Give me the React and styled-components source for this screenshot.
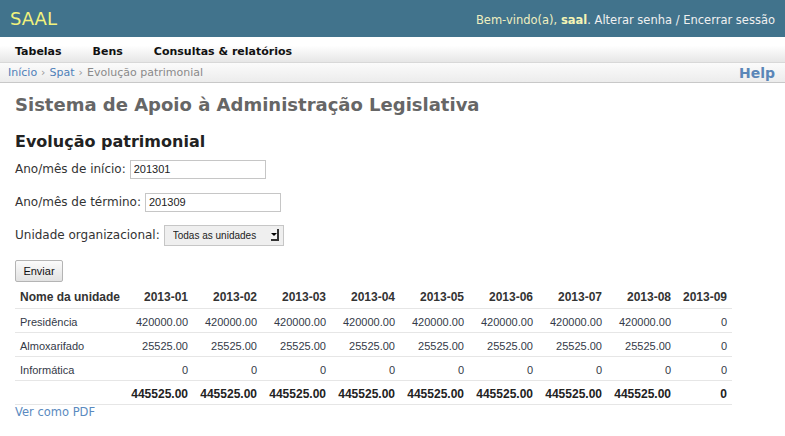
import React from 'react'
import styled, { createGlobalStyle } from 'styled-components'

const GlobalStyle = createGlobalStyle`
  body {
    margin: 0;
    background: #fff;
    font-family: 'DejaVu Sans', 'Noto Sans', sans-serif;
    color: #333;
  }
`

const TopBar = styled.header`
  height: 37px;
  background-color: #41738c;
  display: flex;
  align-items: center;
  justify-content: space-between;
  padding: 0 10px;
`

const Brand = styled.span`
  color: #f2f27c;
  font-size: 18px;
  line-height: 22px;
`

const UserBox = styled.div`
  font-size: 11.5px;
  color: #eeeeee;
  padding-top: 2px;
`

const Welcome = styled.span`
  color: #efefc0;
`

const UserName = styled.strong`
  color: #f5f5b5;
`

const UserLink = styled.a`
  color: #f0f0f0;
  text-decoration: none;
`

const NavBar = styled.nav`
  height: 21px;
  padding-top: 4px;
  display: flex;
  align-items: center;
  background: linear-gradient(#ffffff, #ffffff 35%, #e6e6e6);
  border-bottom: 1px solid #d8d8d8;
`

const NavItem = styled.a`
  font-size: 11px;
  font-weight: bold;
  color: #111;
  padding: 0 15px;
  margin-right: 1px;
  text-decoration: none;
`

const Crumbs = styled.div`
  height: 19px;
  display: flex;
  align-items: center;
  justify-content: space-between;
  padding: 0 10px 0 8px;
  background: linear-gradient(#fbfbfb, #ececec);
  border-bottom: 1px solid #c8c8c8;
  font-size: 11px;
`

const CrumbLink = styled.a`
  color: #4f80b8;
  text-decoration: none;
`

const CrumbSep = styled.span`
  color: #999;
  margin: 0 4px;
`

const CrumbCurrent = styled.span`
  color: #8a8a8a;
`

const HelpLink = styled.a`
  color: #5a86b8;
  font-size: 14px;
  font-weight: bold;
  text-decoration: none;
`

const Main = styled.main`
  padding: 11px 15px 0;
`

const SiteTitle = styled.h1`
  margin: 0 0 16px;
  font-size: 18px;
  line-height: 22px;
  color: #666;
`

const PageTitle = styled.h2`
  margin: 0 0 7px;
  font-size: 16px;
  line-height: 20px;
  color: #222;
`

const FieldRow = styled.div`
  height: 20px;
  display: flex;
  align-items: center;
  gap: 4px;
  margin-bottom: 13px;
  font-size: 12px;
`

const TextInput = styled.input`
  box-sizing: border-box;
  width: 136px;
  height: 19px;
  border: 1px solid #c6c6c6;
  padding: 0 3px;
  font-family: 'Liberation Sans', Arial, sans-serif;
  font-size: 11px;
  color: #222;
  outline: none;
`

const SelectWrap = styled.span`
  position: relative;
  display: inline-block;
`

const Select = styled.select`
  appearance: none;
  box-sizing: border-box;
  width: 120px;
  height: 21px;
  border: 1px solid #c6c6c6;
  background: #efefef;
  padding: 0 16px 0 8px;
  font-family: 'Liberation Sans', Arial, sans-serif;
  font-size: 10px;
  color: #222;
  outline: none;
`

const SelectArrow = styled.span`
  position: absolute;
  right: 5px;
  top: 4px;
  box-sizing: border-box;
  width: 8px;
  height: 12px;
  background: #f4f4f4;
  border-right: 2px solid #333;
  border-bottom: 2px solid #333;
  pointer-events: none;

  &::after {
    content: '';
    position: absolute;
    left: 0;
    top: 4px;
    border-left: 3px solid transparent;
    border-right: 3px solid transparent;
    border-top: 3px solid #000;
  }
`

const SubmitButton = styled.button`
  display: block;
  box-sizing: border-box;
  width: 48px;
  height: 22px;
  margin-top: 15px;
  padding: 0;
  border: 1px solid #b4b4b4;
  border-radius: 2px;
  background: linear-gradient(#fbfbfb, #e2e2e2);
  font-family: 'Liberation Sans', Arial, sans-serif;
  font-size: 11px;
  color: #111;
`

const DataTable = styled.table`
  margin-top: 3px;
  width: 717px;
  table-layout: fixed;
  border-collapse: separate;
  border-spacing: 0;
  font-family: 'Liberation Sans', Arial, sans-serif;
  color: #333;
`

const HeadCell = styled.th`
  padding: 5px 5px 4px;
  line-height: 14px;
  font-size: 12px;
  font-weight: bold;
  color: #333;
  text-align: ${p => (p.$left ? 'left' : 'right')};
  border-bottom: 1px solid #e6e6e6;
  white-space: nowrap;
`

const Cell = styled.td`
  padding: 6px 5px 3px;
  line-height: 14px;
  font-size: ${p => (p.$total ? '12px' : '11px')};
  font-weight: ${p => (p.$total ? 'bold' : 'normal')};
  color: ${p => (p.$total ? '#222' : '#343a48')};
  text-align: ${p => (p.$left ? 'left' : 'right')};
  border-bottom: 1px solid #e6e6e6;
  white-space: nowrap;
`

const PdfLink = styled.a`
  display: block;
  font-size: 11.5px;
  line-height: 14px;
  color: #5a8ac0;
  text-decoration: none;
`

const months = ['2013-01', '2013-02', '2013-03', '2013-04', '2013-05', '2013-06', '2013-07', '2013-08', '2013-09']

const fill = (value, last) => [...Array(8).fill(value), last]

const units = [
  { name: 'Presidência', values: fill('420000.00', '0') },
  { name: 'Almoxarifado', values: fill('25525.00', '0') },
  { name: 'Informática', values: fill('0', '0') },
]

const totals = fill('445525.00', '0')

const App = () => (
  <>
    <GlobalStyle />
    <TopBar>
      <Brand>SAAL</Brand>
      <UserBox>
        <Welcome>Bem-vindo(a), </Welcome>
        <UserName>saal</UserName>. <UserLink href="#">Alterar senha</UserLink> / <UserLink href="#">Encerrar sessão</UserLink>
      </UserBox>
    </TopBar>
    <NavBar>
      <NavItem href="#">Tabelas</NavItem>
      <NavItem href="#">Bens</NavItem>
      <NavItem href="#">Consultas &amp; relatórios</NavItem>
    </NavBar>
    <Crumbs>
      <div>
        <CrumbLink href="#">Início</CrumbLink>
        <CrumbSep>›</CrumbSep>
        <CrumbLink href="#">Spat</CrumbLink>
        <CrumbSep>›</CrumbSep>
        <CrumbCurrent>Evolução patrimonial</CrumbCurrent>
      </div>
      <HelpLink href="#">Help</HelpLink>
    </Crumbs>
    <Main>
      <SiteTitle>Sistema de Apoio à Administração Legislativa</SiteTitle>
      <PageTitle>Evolução patrimonial</PageTitle>
      <FieldRow>
        <label htmlFor="inicio">Ano/mês de início:</label>
        <TextInput id="inicio" defaultValue="201301" />
      </FieldRow>
      <FieldRow>
        <label htmlFor="termino">Ano/mês de término:</label>
        <TextInput id="termino" defaultValue="201309" />
      </FieldRow>
      <FieldRow>
        <label htmlFor="unidade">Unidade organizacional:</label>
        <SelectWrap>
          <Select id="unidade" defaultValue="">
            <option value="">Todas as unidades</option>
          </Select>
          <SelectArrow />
        </SelectWrap>
      </FieldRow>
      <SubmitButton type="submit">Enviar</SubmitButton>
      <DataTable>
        <colgroup>
          <col style={{ width: 109 }} />
          {months.map((m, i) => (
            <col key={m} style={{ width: i === months.length - 1 ? 56 : 69 }} />
          ))}
        </colgroup>
        <thead>
          <tr>
            <HeadCell $left>Nome da unidade</HeadCell>
            {months.map(m => (
              <HeadCell key={m}>{m}</HeadCell>
            ))}
          </tr>
        </thead>
        <tbody>
          {units.map(u => (
            <tr key={u.name}>
              <Cell $left>{u.name}</Cell>
              {u.values.map((v, i) => (
                <Cell key={i}>{v}</Cell>
              ))}
            </tr>
          ))}
          <tr>
            <Cell $left />
            {totals.map((v, i) => (
              <Cell key={i} $total>{v}</Cell>
            ))}
          </tr>
        </tbody>
      </DataTable>
      <PdfLink href="#">Ver como PDF</PdfLink>
    </Main>
  </>
)

export default App
